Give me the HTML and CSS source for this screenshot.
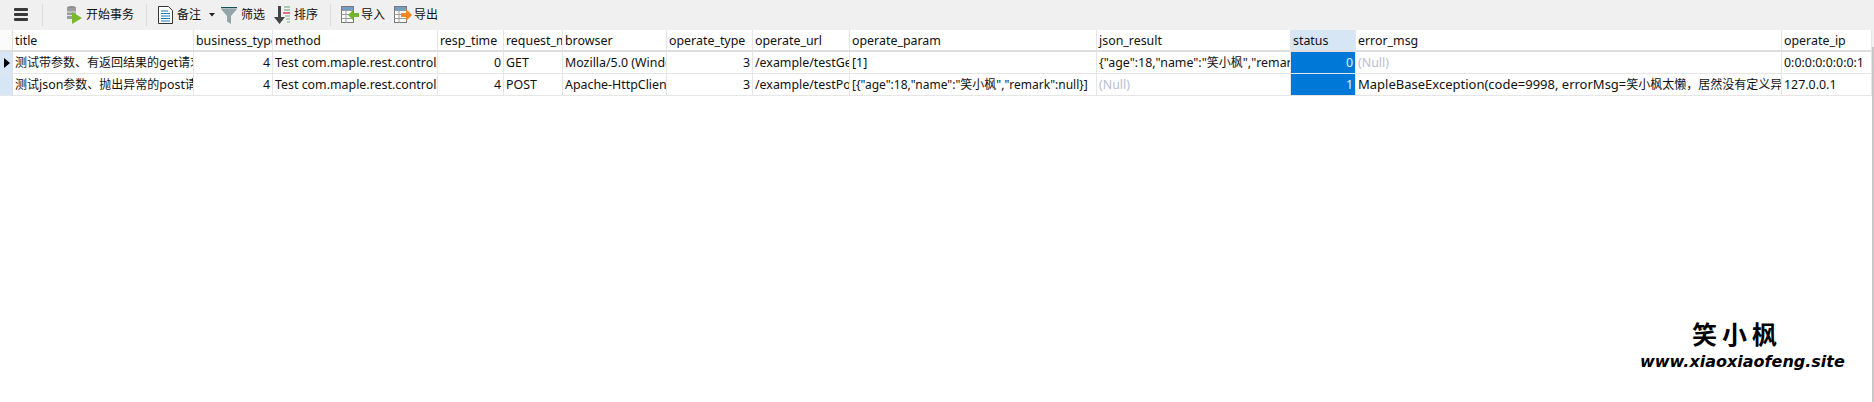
FILE: index.html
```html
<!DOCTYPE html>
<html lang="zh">
<head>
<meta charset="utf-8">
<title>sys_oper_log</title>
<link rel="stylesheet" href="styles.css">
</head>
<body>
<div class="toolbar">
  <div class="menu"><span></span><span></span><span></span></div>
  <i class="sep sep-a"></i>
  <div class="tool tool-begin">
    <svg width="17" height="20" viewBox="0 0 17 20"><ellipse cx="5.500" cy="3" rx="4.500" ry="2" fill="#8a8f94"/><rect x="1" y="3" width="9" height="11" fill="#9a9ea2"/><path d="M1 7h9M1 10.500h9" stroke="#e4e4e4"/><path d="M6 7l10 6-10 6z" fill="#7ab929"/></svg>
    <span>开始事务</span>
  </div>
  <i class="sep sep-b"></i>
  <div class="tool tool-note">
    <svg width="15" height="18" viewBox="0 0 15 18"><path d="M.500.500h10l4 4v13h-14z" fill="#fff" stroke="#333"/><path d="M3 5h7M3 7.500h9M3 10h9M3 12.500h9M3 15h9" stroke="#1b7fb8" stroke-width="1.200"/></svg>
    <span>备注</span>
    <svg class="caret" width="6" height="4" viewBox="0 0 6 4"><path d="M0 0h6L3 3.500z" fill="#222"/></svg>
  </div>
  <div class="tool tool-filter">
    <svg width="16" height="17" viewBox="0 0 16 17"><path d="M0 .500h16" stroke="#11525f" stroke-width="1.600"/><path d="M0 2h16l-6 7v8l-4-2.500V9z" fill="#93a5a8"/></svg>
    <span>筛选</span>
  </div>
  <div class="tool tool-sort">
    <svg width="17" height="19" viewBox="0 0 17 19"><path d="M4 0h3v11h4l-5.500 7L0 11h4z" fill="#444"/><path d="M10 1h6" stroke="#79b087" stroke-width="1.200"/><path d="M10 4h6" stroke="#79b087" stroke-width="1.200"/><path d="M9 7h7" stroke="#e0364f" stroke-width="1.400"/><path d="M11 10h5M12 13h4M13 16h3" stroke="#79b087" stroke-width="1.200"/></svg>
    <span>排序</span>
  </div>
  <i class="sep sep-c"></i>
  <div class="tool tool-import">
    <svg width="18" height="18" viewBox="0 0 18 18"><rect x=".500" y=".500" width="12" height="16" fill="#fff" stroke="#777"/><path d="M.500 4.500h12M.500 8.500h12M.500 12.500h12M5 1v16" stroke="#999"/><path d="M1 1h11v3H1z" fill="#6f9ec9"/><path d="M7 9l5-5v3h6v4h-6v3z" fill="#72b62b"/></svg>
    <span>导入</span>
  </div>
  <div class="tool tool-export">
    <svg width="18" height="18" viewBox="0 0 18 18"><rect x=".500" y=".500" width="12" height="16" fill="#fff" stroke="#777"/><path d="M.500 4.500h12M.500 8.500h12M.500 12.500h12M5 1v16" stroke="#999"/><path d="M1 1h11v3H1z" fill="#6f9ec9"/><path d="M7 7h5V3l6 6-6 6v-4H7z" fill="#f5861f"/></svg>
    <span class="clipped">导出</span>
  </div>
</div>
<div class="content">
<div class="grid">
  <div class="gutter gutter-head"></div>
  <div class="head">title</div>
  <div class="head">business_type</div>
  <div class="head">method</div>
  <div class="head">resp_time</div>
  <div class="head">request_method</div>
  <div class="head">browser</div>
  <div class="head">operate_type</div>
  <div class="head">operate_url</div>
  <div class="head">operate_param</div>
  <div class="head">json_result</div>
  <div class="head head-active">status</div>
  <div class="head">error_msg</div>
  <div class="head">operate_ip</div>

  <div class="gutter"><svg width="6" height="10" viewBox="0 0 6 10"><path d="M0 0l6 5-6 5z" fill="#000"/></svg></div>
  <div class="cell"><span class="cjk">测试带参数、有返回结果的</span>get<span class="cjk">请求</span></div>
  <div class="cell num">4</div>
  <div class="cell">Test com.maple.rest.controller</div>
  <div class="cell num">0</div>
  <div class="cell">GET</div>
  <div class="cell">Mozilla/5.0 (Windows NT 10.0)</div>
  <div class="cell num">3</div>
  <div class="cell">/example/testGet</div>
  <div class="cell">[1]</div>
  <div class="cell">{"age":18,"name":"<span class="cjk">笑小枫</span>","remark":null}</div>
  <div class="cell num selected">0</div>
  <div class="cell null">(Null)</div>
  <div class="cell">0:0:0:0:0:0:0:1</div>

  <div class="gutter"></div>
  <div class="cell"><span class="cjk">测试</span>json<span class="cjk">参数、抛出异常的</span>post<span class="cjk">请求</span></div>
  <div class="cell num">4</div>
  <div class="cell">Test com.maple.rest.controller</div>
  <div class="cell num">4</div>
  <div class="cell">POST</div>
  <div class="cell">Apache-HttpClient/4.5</div>
  <div class="cell num">3</div>
  <div class="cell">/example/testPost</div>
  <div class="cell cell-param">[{"age":18,"name":"<span class="cjk">笑小枫</span>","remark":null}]</div>
  <div class="cell null">(Null)</div>
  <div class="cell num selected">1</div>
  <div class="cell cell-err">MapleBaseException(code=9998, errorMsg=<span class="cjk">笑小枫太懒，居然没有定义异常信息</span>)</div>
  <div class="cell">127.0.0.1</div>
</div>
<div class="rail"></div>
</div>
<div class="watermark">
  <div class="mark-cn">笑小枫</div>
  <div class="mark-url">www.xiaoxiaofeng.site</div>
</div>
</body>
</html>
```
FILE: styles.css
```css
* { box-sizing: border-box; }
html, body { margin: 0; height: 100%; background: #fff; overflow: hidden; }
body {
  position: relative;
  display: flex;
  flex-direction: column;
  font-family: "Noto Sans", "Noto Sans CJK SC", sans-serif;
  font-size: 12px;
  color: #111;
}
.toolbar {
  height: 30px;
  flex: none;
  background: #f0f0f0;
  display: flex;
  align-items: center;
  padding-left: 14px;
}
.menu { width: 14px; display: flex; flex-direction: column; gap: 2px; margin-top: -1px; }
.menu span { height: 3px; background: #3a3a3a; border-radius: 1px; }
.sep { width: 1px; height: 22px; background: #dcdcdc; flex: none; }
.sep-a { margin-left: 14px; }
.sep-b { margin-left: 12px; }
.sep-c { margin-left: 12px; }
.tool { display: flex; align-items: center; white-space: nowrap; }
.tool svg { flex: none; }
.tool span { line-height: 16px; }
.tool-begin { margin-left: 23px; gap: 3px; }
.tool-note { margin-left: 11px; gap: 4px; }
.caret { margin-left: 4px; }
.tool-filter { margin-left: 6px; gap: 4px; }
.tool-sort { margin-left: 9px; gap: 3px; }
.tool-import { margin-left: 10px; gap: 2px; }
.tool-export { margin-left: 9px; gap: 2px; }
.clipped { width: 24px; overflow: hidden; }
.content { flex: 1; display: flex; min-height: 0; }
.grid {
  display: grid;
  flex: none;
  width: 1872px;
  align-self: flex-start;
  grid-template-columns: 13px 181px 79px 165px 66px 59px 104px 86px 97px 247px 194px 65px 426px 90px;
  grid-auto-rows: 22px;
}
.rail {
  flex: 1;
  background: linear-gradient(#f0f0f0 17px, #c8c8c8 17px);
}
.gutter {
  background: #d6e6f5;
  border-right: 1px solid #dedede;
  border-bottom: 1px solid #e6e6e6;
  display: flex;
  align-items: center;
  padding-left: 4px;
}
.gutter-head { background: #fbfbfb; border-bottom: 2px solid #dedede; }
.head, .cell {
  padding: 0 2px;
  white-space: nowrap;
  overflow: hidden;
  font-size: 12.4px;
  line-height: 21px;
  border-right: 1px solid #e6e6e6;
  border-bottom: 1px solid #e6e6e6;
  color: #111;
}
.cell-param { font-size: 12px; }
.cell-err { font-size: 13px; }
.cjk { font-size: 12px; }
.head { border-bottom: 2px solid #dedede; }
.head-active { background: #d6e6f5; }
.num { text-align: right; }
.selected { background: #0078d7; color: #e8f2fb; }
.null { color: #bcbcd2; }
.watermark {
  position: absolute;
  right: 0;
  top: 318px;
  width: 254px;
  padding-left: 20px;
  color: #000;
}
.mark-cn {
  font-family: "Noto Sans CJK SC", sans-serif;
  font-weight: 700;
  font-size: 25px;
  letter-spacing: 5px;
  line-height: 30px;
  padding-left: 52px;
}
.mark-url {
  font-family: "DejaVu Sans", sans-serif;
  font-weight: 700;
  font-style: italic;
  font-size: 16px;
  line-height: 22px;
  margin-top: 3px;
}
```
